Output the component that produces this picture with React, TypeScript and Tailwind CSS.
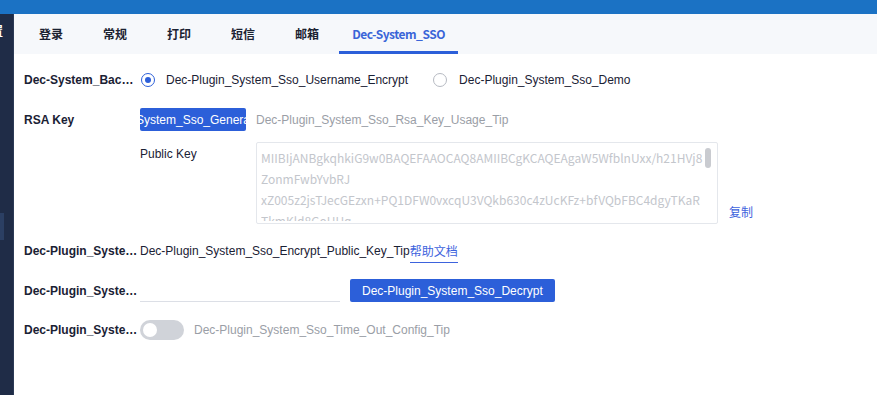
import React from "react";

const SANS = { fontFamily: '"Liberation Sans", Arial, sans-serif' };
const CJK = { fontFamily: '"Noto Sans CJK SC", "Noto Sans", sans-serif' };

function Label({ children }: { children: React.ReactNode }) {
  return (
    <div className="w-[116px] shrink-0 whitespace-nowrap overflow-hidden text-[12px] font-bold text-[#1a2134]">
      {children}
    </div>
  );
}

function Radio({ checked }: { checked?: boolean }) {
  return checked ? (
    <span className="w-[14px] h-[14px] rounded-full border border-[#2c5fd9] flex items-center justify-center shrink-0">
      <span className="w-[6px] h-[6px] rounded-full bg-[#2c5fd9]" />
    </span>
  ) : (
    <span className="w-[14px] h-[14px] rounded-full border border-[#b6bac2] shrink-0" />
  );
}

export default function App() {
  const tabs = ["登录", "常规", "打印", "短信", "邮箱"];
  return (
    <div className="w-[877px] h-[395px] flex flex-col overflow-hidden bg-white" style={SANS}>
      <div className="h-[14px] shrink-0 bg-[#1b72c4]" />
      <div className="flex flex-1 min-h-0">
        <aside className="w-[14px] shrink-0 bg-[#1f2c47] border-r border-[#2c3a55] flex flex-col overflow-hidden">
          <span className="mt-[9px] -ml-[9px] text-white text-[12px] font-bold leading-[16px] whitespace-nowrap" style={CJK}>
            置
          </span>
          <div className="mt-[174px] w-[4px] h-[27px] bg-[#2b3f63]" />
        </aside>
        <main className="flex-1 flex flex-col">
          <nav className="h-[40px] shrink-0 bg-[#f6f8fb] flex pl-[5px]" style={CJK}>
            {tabs.map((t) => (
              <div
                key={t}
                className="min-w-[64px] px-[14px] flex items-center justify-center text-[12px] font-bold text-[#1b2231]"
              >
                {t}
              </div>
            ))}
            <div className="w-[119px] flex items-center justify-center text-[12px] font-bold tracking-[-0.5px] text-[#3a65d8] border-b-[3px] border-[#2c5fd9] pt-[3px] whitespace-nowrap">
              Dec-System_SSO
            </div>
          </nav>

          <div className="flex flex-col pl-[10px] text-[12px] text-[#1a2134]">
            {/* Row 1 */}
            <div className="mt-[14px] h-[24px] flex items-center">
              <Label>Dec-System_Bac…</Label>
              <div className="flex items-center ml-[1px]">
                <Radio checked />
                <span className="ml-[11px] mr-[25px] text-[#1a2134]">Dec-Plugin_System_Sso_Username_Encrypt</span>
                <Radio />
                <span className="ml-[12px] text-[#1a2134]">Dec-Plugin_System_Sso_Demo</span>
              </div>
            </div>

            {/* Row 2 */}
            <div className="mt-[16px] h-[23px] flex items-center">
              <Label>RSA Key</Label>
              <div className="w-[106px] h-[23px] rounded-[2px] bg-[#2c5fd9] text-white flex items-center justify-center overflow-hidden whitespace-nowrap">
                <span className="shrink-0">Dec-Plugin_System_Sso_Generate_Rsa_Key</span>
              </div>
              <span className="ml-[10px] text-[#9a9ea6]">Dec-Plugin_System_Sso_Rsa_Key_Usage_Tip</span>
            </div>

            {/* Row 3 */}
            <div className="mt-[11px] flex">
              <div className="w-[116px] shrink-0" />
              <div className="w-[116px] shrink-0 pt-[5px] leading-[14px] text-[#1a2134]">Public Key</div>
              <div className="w-[462px] h-[82px] border border-[#e4e7ec] rounded-[2px] relative pl-[4px] pt-[4px]">
                <div
                  className="h-[74px] overflow-hidden text-[12px] leading-[21px] text-[#c3c6cc] whitespace-nowrap"
                  style={CJK}
                >
                  <div>MIIBIjANBgkqhkiG9w0BAQEFAAOCAQ8AMIIBCgKCAQEAgaW5WfblnUxx/h21HVj8</div>
                  <div>ZonmFwbYvbRJ</div>
                  <div>xZ005z2jsTJecGEzxn+PQ1DFW0vxcqU3VQkb630c4zUcKFz+bfVQbFBC4dgyTKaR</div>
                  <div>TkmKld8GoUUq</div>
                </div>
                <div className="absolute right-[6px] top-[5px] w-[6px] h-[20px] rounded-full bg-[#c9cbd0]" />
              </div>
              <span className="ml-[11px] self-end mb-[4px] leading-[16px] text-[#3d63dd]" style={CJK}>
                复制
              </span>
            </div>

            {/* Row 4 */}
            <div className="mt-[15px] h-[24px] flex items-center">
              <Label>Dec-Plugin_Syste…</Label>
              <span className="text-[#1a2134]">Dec-Plugin_System_Sso_Encrypt_Public_Key_Tip</span>
              <span className="h-[24px] flex items-center border-b border-[#3d63dd] text-[#3d63dd]" style={CJK}>
                帮助文档
              </span>
            </div>

            {/* Row 5 */}
            <div className="mt-[16px] h-[23px] flex items-center">
              <Label>Dec-Plugin_Syste…</Label>
              <div className="w-[200px] h-[23px] border-b border-[#dcdfe6]" />
              <button className="ml-[10px] h-[23px] px-[12px] rounded-[2px] bg-[#2c5fd9] text-white whitespace-nowrap">
                Dec-Plugin_System_Sso_Decrypt
              </button>
            </div>

            {/* Row 6 */}
            <div className="mt-[16px] h-[24px] flex items-center">
              <Label>Dec-Plugin_Syste…</Label>
              <div className="w-[44px] h-[20px] rounded-full bg-[#d0d3d9] flex items-center pl-[3px] shrink-0">
                <span className="w-[14px] h-[14px] rounded-full bg-white" />
              </div>
              <span className="ml-[10px] text-[#9a9ea6]">Dec-Plugin_System_Sso_Time_Out_Config_Tip</span>
            </div>
          </div>
        </main>
      </div>
    </div>
  );
}
